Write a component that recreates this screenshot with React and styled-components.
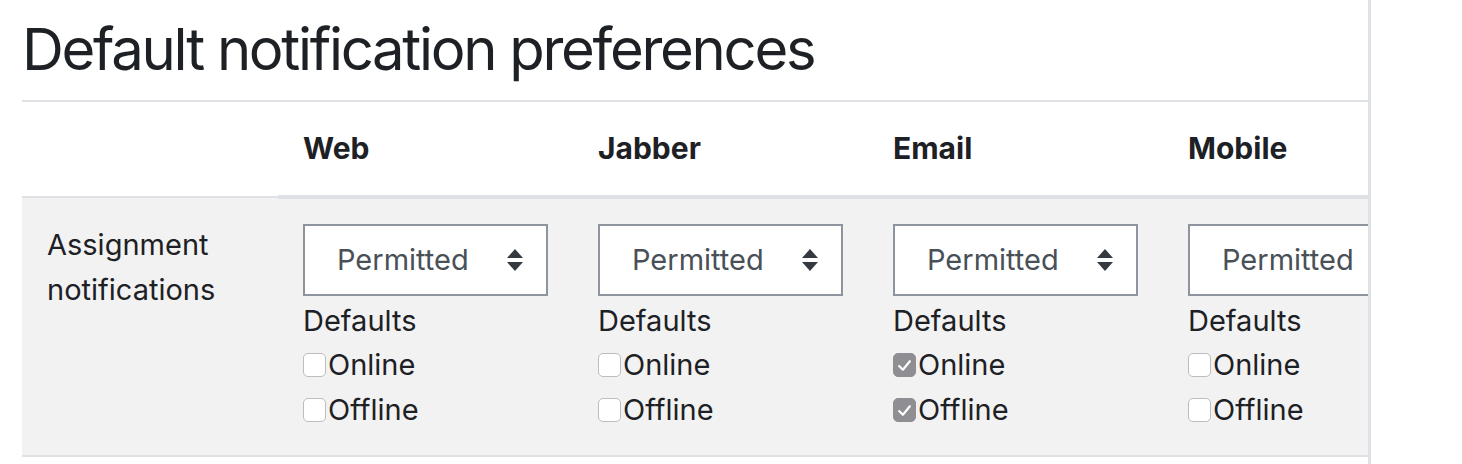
import React from 'react';
import styled, { createGlobalStyle } from 'styled-components';

const GlobalStyle = createGlobalStyle`
  html, body {
    margin: 0;
    padding: 0;
    background: #fff;
  }
  body {
    font-family: Inter, 'Noto Sans', sans-serif;
    color: #1d2125;
    font-size: 30px;
    line-height: 1.5;
  }
`;

const Page = styled.div`
  width: 1371px;
  height: 464px;
  box-sizing: border-box;
  border-right: 3px solid #dee2e6;
  overflow: hidden;
  padding-left: 22px;
`;

const Title = styled.h2`
  margin: 15px 0 0 0;
  font-size: 58px;
  font-weight: 400;
  line-height: 1.2;
  letter-spacing: -2.3px;
  padding-bottom: 15px;
`;

const Table = styled.table`
  border-collapse: collapse;
  table-layout: fixed;
  width: 1436px;
`;

const HeadCell = styled.th`
  text-align: left;
  font-weight: 700;
  padding: 24px 25px 24px 25px;
  width: ${({ $first }) => ($first ? '206px' : '245px')};
  border-top: 2px solid #dee2e6;
  border-bottom: ${({ $first }) => ($first ? '0' : '4px solid #dee2e6')};
  vertical-align: bottom;
  line-height: 45px;
`;

const Row = styled.tr`
  background: #f2f2f2;
  border-top: 2px solid #dee2e6;
  border-bottom: 2px solid #dee2e6;
`;

const LabelCell = styled.td`
  padding: 24px 25px;
  vertical-align: top;
  line-height: 45px;
  font-size: 29px;
`;

const Cell = styled.td`
  padding: 25px 25px 22px 25px;
  vertical-align: top;
`;

const SelectBox = styled.div`
  width: 245px;
  height: 72px;
  box-sizing: border-box;
  border: 2px solid #8f959e;
  background: #fff;
  display: flex;
  align-items: center;
  justify-content: space-between;
  padding: 0 22px 0 32px;
  color: #495057;
  font-size: 29px;
`;

const Defaults = styled.div`
  line-height: 45px;
  margin-top: 2px;
  font-size: 29px;
`;

const CheckRow = styled.label`
  display: flex;
  align-items: center;
  height: 45px;
  font-size: 29px;
`;

const Box = styled.span`
  width: 23px;
  height: 24px;
  border-radius: 5px;
  margin-right: 2px;
  display: inline-flex;
  align-items: center;
  justify-content: center;
  box-sizing: border-box;
  background: ${({ $on }) => ($on ? '#8e8e93' : '#fff')};
  border: 1.5px solid ${({ $on }) => ($on ? '#8e8e93' : '#bdbdbd')};
`;

const Arrows = () => (
  <svg width="18" height="26" viewBox="0 0 18 26">
    <path d="M9 2 L17 11 H1 Z" fill="#343a40" />
    <path d="M1 15 H17 L9 24 Z" fill="#343a40" />
  </svg>
);

const Check = () => (
  <svg width="15" height="13" viewBox="0 0 14 12">
    <path d="M2 6.5 L5.5 10 L12 2" stroke="#fff" strokeWidth="2" fill="none" strokeLinecap="round" strokeLinejoin="round" />
  </svg>
);

const Checkbox = ({ on, label }) => (
  <CheckRow>
    <Box $on={on}>{on && <Check />}</Box>
    {label}
  </CheckRow>
);

const outputs = [
  { name: 'Web', online: false, offline: false },
  { name: 'Jabber', online: false, offline: false },
  { name: 'Email', online: true, offline: true },
  { name: 'Mobile', online: false, offline: false },
];

export default function App() {
  return (
    <>
      <GlobalStyle />
      <Page>
        <Title>Default notification preferences</Title>
        <Table>
          <thead>
            <tr>
              <HeadCell $first />
              {outputs.map((o) => (
                <HeadCell key={o.name}>{o.name}</HeadCell>
              ))}
            </tr>
          </thead>
          <tbody>
            <Row>
              <LabelCell>Assignment notifications</LabelCell>
              {outputs.map((o) => (
                <Cell key={o.name}>
                  <SelectBox>
                    <span>Permitted</span>
                    <Arrows />
                  </SelectBox>
                  <Defaults>Defaults</Defaults>
                  <Checkbox on={o.online} label="Online" />
                  <Checkbox on={o.offline} label="Offline" />
                </Cell>
              ))}
            </Row>
          </tbody>
        </Table>
      </Page>
    </>
  );
}
